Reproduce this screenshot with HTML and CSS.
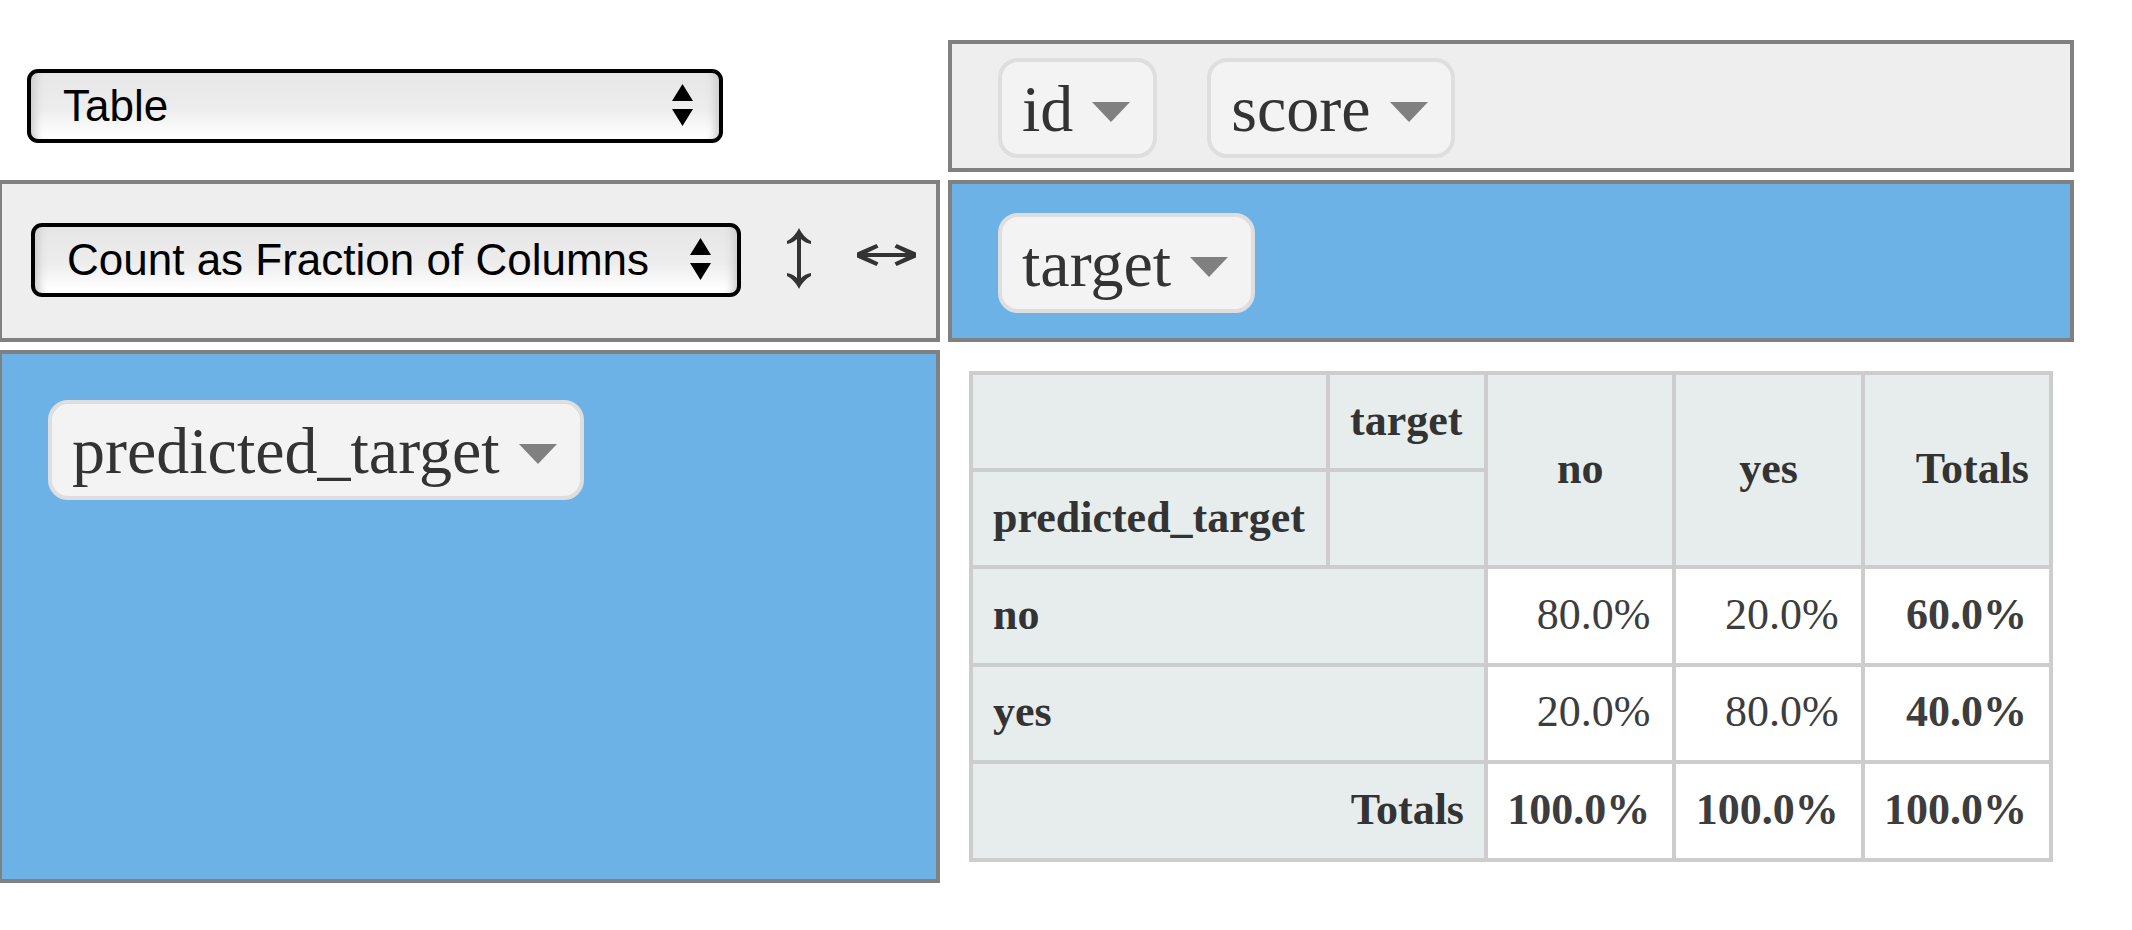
FILE: index.html
```html
<!DOCTYPE html>
<html lang="en">
<head>
<meta charset="utf-8">
<meta name="viewport" content="width=device-width, initial-scale=1">
<title>Pivot table</title>
<link rel="stylesheet" href="styles.css">
</head>
<body>
<main class="pivot-ui">
  <div class="renderer-cell">
    <div class="picker picker-renderer">
      <select class="picker-select" aria-label="Renderer">
        <option>Table</option>
      </select>
      <svg class="picker-arrows" viewBox="0 0 21 42" aria-hidden="true"><path d="M10.5 0 21 17H0zM0 25h21L10.5 42z"/></svg>
    </div>
  </div>

  <div class="panel unused">
    <button class="attr" type="button">id <svg class="caret" viewBox="0 0 38 20" aria-hidden="true"><path d="M0 0h38L19 20z"/></svg></button>
    <button class="attr" type="button">score <svg class="caret" viewBox="0 0 38 20" aria-hidden="true"><path d="M0 0h38L19 20z"/></svg></button>
  </div>

  <div class="panel vals">
    <div class="picker picker-aggregator">
      <select class="picker-select" aria-label="Aggregator">
        <option>Count as Fraction of Columns</option>
      </select>
      <svg class="picker-arrows" viewBox="0 0 21 42" aria-hidden="true"><path d="M10.5 0 21 17H0zM0 25h21L10.5 42z"/></svg>
    </div>
    <button class="order" type="button" aria-label="Row order">
      <svg class="order-rows" viewBox="0 0 24 61" aria-hidden="true"><path d="M12 0C14.500 5.500 19 10.500 24 13V16C20 15.500 16.500 13.500 14 11V50C16.500 47.500 20 45.500 24 45V48C19 50.500 14.500 55.500 12 61C9.500 55.500 5 50.500 0 48V45C4 45.500 7.500 47.500 10 50V11C7.500 13.500 4 15.500 0 16V13C5 10.500 9.500 5.500 12 0z"/></svg>
    </button>
    <button class="order" type="button" aria-label="Column order">
      <svg class="order-cols" viewBox="0 0 59 22" aria-hidden="true"><path d="M0 8.500 19.500 0 21.500 3.500 10 9H49L37.500 3.500 39.500 0 59 8.500V13.500L39.500 22 37.500 18.500 49 13H10L21.500 18.500 19.500 22 0 13.500z"/></svg>
    </button>
  </div>

  <div class="panel cols">
    <button class="attr" type="button">target <svg class="caret" viewBox="0 0 38 20" aria-hidden="true"><path d="M0 0h38L19 20z"/></svg></button>
  </div>

  <div class="panel rows">
    <button class="attr" type="button">predicted_target <svg class="caret" viewBox="0 0 38 20" aria-hidden="true"><path d="M0 0h38L19 20z"/></svg></button>
  </div>

  <div class="output">
    <table class="pvt">
      <colgroup><col class="col-row-label"><col class="col-axis"><col><col><col></colgroup>
      <thead>
        <tr><th></th><th class="axis">target</th><th class="col-label" rowspan="2">no</th><th class="col-label" rowspan="2">yes</th><th class="total-label" rowspan="2">Totals</th></tr>
        <tr><th class="axis">predicted_target</th><th></th></tr>
      </thead>
      <tbody>
        <tr><th class="row-label" colspan="2">no</th><td>80.0%</td><td>20.0%</td><td class="total">60.0%</td></tr>
        <tr><th class="row-label" colspan="2">yes</th><td>20.0%</td><td>80.0%</td><td class="total">40.0%</td></tr>
        <tr><th class="total-label" colspan="2">Totals</th><td class="total">100.0%</td><td class="total">100.0%</td><td class="total">100.0%</td></tr>
      </tbody>
    </table>
  </div>
</main>
</body>
</html>
```
FILE: styles.css
```css
* {
  box-sizing: border-box;
}

body {
  margin: 0;
  background: #fff;
  color: #333;
  font-family: "Liberation Serif", "Times New Roman", serif;
  overflow-x: hidden;
}

.pivot-ui {
  display: grid;
  grid-template-columns: 942fr 1126fr;
  gap: 8px;
  margin: 40px 58px 40px -2px;
}

.renderer-cell {
  display: flex;
  align-items: center;
  padding-left: 29px;
}

.panel {
  display: flex;
  align-items: flex-start;
  border: 4px solid #808080;
  background: #eee;
}

.unused {
  gap: 50px;
  padding: 14px 46px 10px;
}

.vals {
  align-items: center;
  justify-content: space-between;
  padding: 0 20px 2px 29px;
}

.cols {
  padding: 29px 46px 25px;
  background: #6db2e6;
}

.rows {
  padding: 46px;
  background: #6db2e6;
}

.attr {
  display: flex;
  align-items: center;
  gap: 19px;
  height: 100px;
  padding: 2px 23px 0 20px;
  border: 4px solid #dedede;
  border-radius: 20px;
  background: #f3f3f3;
  color: #333;
  font-family: inherit;
  font-size: 66px;
  line-height: 92px;
}

.caret {
  width: 38px;
  height: 20px;
  margin-top: 6px;
  fill: #808080;
}

.picker {
  position: relative;
  max-width: 100%;
}

.picker-renderer {
  width: 696px;
}

.picker-aggregator {
  width: 710px;
}

.picker-select {
  display: block;
  width: 100%;
  height: 74px;
  padding: 0 66px 2px 32px;
  appearance: none;
  border: 4px solid #000;
  border-radius: 11px;
  background: linear-gradient(#e6e6e6, #ededed 55%, #fff 95%);
  box-shadow: inset 14px 0 8px -10px #ccc, inset -14px 0 8px -10px #ccc;
  color: #000;
  font-family: "Liberation Sans", Arial, sans-serif;
  font-size: 44px;
}

.picker-arrows {
  position: absolute;
  top: 15px;
  right: 30px;
  width: 21px;
  height: 42px;
  pointer-events: none;
}

.order {
  display: flex;
  padding: 0 0 4px;
  border: 0;
  background: none;
  fill: #333;
}

.order-rows {
  width: 24px;
  height: 61px;
}

.order-cols {
  width: 59px;
  height: 22px;
  margin-bottom: 6px;
}

.output {
  padding: 21px;
}

.pvt {
  width: 100%;
  height: 491px;
  table-layout: fixed;
  border-collapse: collapse;
  font-size: 44px;
  line-height: 52px;
}

.col-row-label {
  width: 357px;
}

.col-axis {
  width: 158px;
}

.pvt th,
.pvt td {
  height: 97px;
  padding: 0 20px;
  border: 4px solid #cdcdcd;
}

.pvt th {
  padding-bottom: 2px;
  background: #e7eded;
  text-align: left;
}

.pvt td {
  padding: 0 22px 2px 18px;
  background: #fff;
  color: #3d3d3d;
  text-align: right;
}

.pvt .col-label {
  text-align: center;
}

.pvt .total-label {
  text-align: right;
}

.pvt .total {
  font-weight: bold;
}
```
